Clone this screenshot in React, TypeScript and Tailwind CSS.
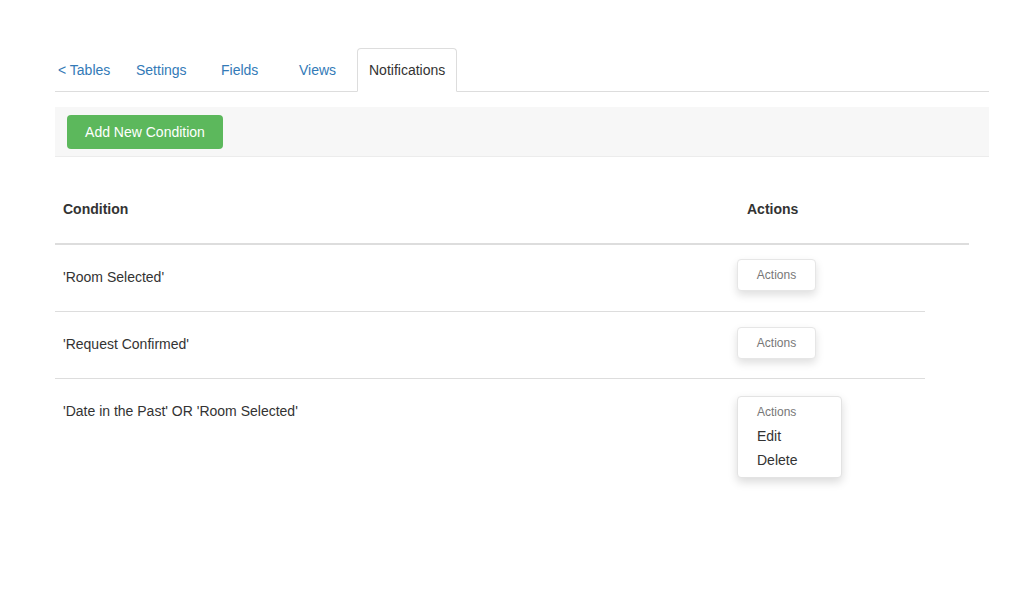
import React from "react";

const rows = [
  { text: "'Room Selected'", open: false, btnPad: "pt-[14px]" },
  { text: "'Request Confirmed'", open: false, btnPad: "pt-[15px]" },
  { text: "'Date in the Past' OR 'Room Selected'", open: true, btnPad: "pt-[17px]" },
];

function ActionsButton() {
  return (
    <div className="w-[79px] h-[32px] flex items-center justify-center rounded border border-[#e6e6e6] bg-white text-[12px] text-[#777] shadow-[0_4px_8px_rgba(0,0,0,0.13)]">
      Actions
    </div>
  );
}

function ActionsMenu() {
  return (
    <div className="w-[105px] rounded border border-[#e3e3e3] bg-white pt-[3px] pb-[5px] pl-[19px] shadow-[0_4px_10px_rgba(0,0,0,0.15)]">
      <div className="leading-[24px] text-[12px] text-[#777]">Actions</div>
      <div className="leading-[24px] text-[14px] text-[#333]">Edit</div>
      <div className="leading-[24px] text-[14px] text-[#333]">Delete</div>
    </div>
  );
}

export default function App() {
  return (
    <div
      className="min-h-[602px] bg-white text-[14px] text-[#333]"
      style={{ fontFamily: '"Liberation Sans", Arial, sans-serif' }}
    >
      <div className="ml-[55px] w-[934px] pt-[48px]">
        {/* Tabs */}
        <div className="flex h-[44px] border-b border-[#ddd]">
          <div className="w-[69px] h-[44px] pl-[3px] flex items-center text-[#337ab7]">&lt; Tables</div>
          <div className="w-[85px] h-[44px] pl-[12px] flex items-center text-[#337ab7]">Settings</div>
          <div className="w-[78px] h-[44px] pl-[12px] flex items-center text-[#337ab7]">Fields</div>
          <div className="w-[70px] h-[44px] pl-[12px] flex items-center text-[#337ab7]">Views</div>
          <div className="w-[100px] h-[44px] pl-[11px] flex items-center rounded-t border border-[#ddd] border-b-white bg-white text-[#333]">
            Notifications
          </div>
        </div>

        {/* Toolbar */}
        <div className="mt-[15px] h-[50px] bg-[#f7f7f7] border-b border-[#ececec] pt-[8px] pl-[12px]">
          <button className="w-[156px] h-[34px] rounded bg-[#5cb85c] text-white text-[14px]">
            Add New Condition
          </button>
        </div>

        {/* Table header */}
        <div className="flex w-[914px] h-[88px] border-b-2 border-[#ddd] pt-[42px] font-bold leading-[20px]">
          <div className="w-[682px] pl-[8px]">Condition</div>
          <div className="pl-[10px]">Actions</div>
        </div>

        {/* Rows */}
        {rows.map((r, i) => (
          <div
            key={i}
            className={
              i < rows.length - 1
                ? "flex w-[870px] h-[67px] border-b border-[#ddd]"
                : "flex w-[870px] h-[120px]"
            }
          >
            <div className="w-[682px] pl-[8px] pt-[22px] leading-[20px]">{r.text}</div>
            <div className={r.btnPad}>
              {r.open ? <ActionsMenu /> : <ActionsButton />}
            </div>
          </div>
        ))}
      </div>
    </div>
  );
}
